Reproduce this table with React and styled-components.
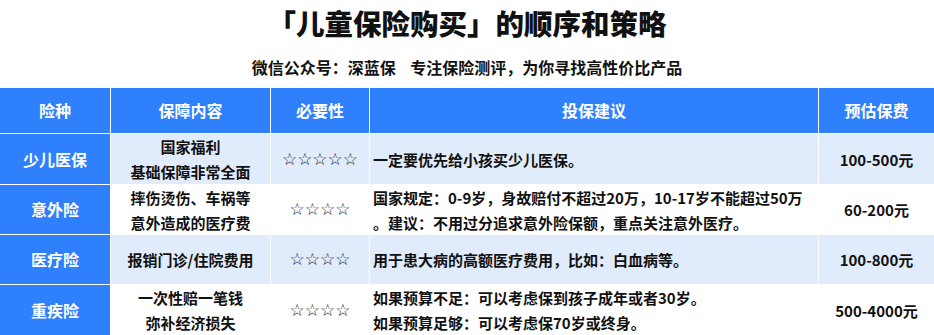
import styled, { createGlobalStyle } from 'styled-components'

const GlobalStyle = createGlobalStyle`
  body {
    margin: 0;
    background: #fff;
    font-family: "Noto Sans CJK SC", "Noto Sans", sans-serif;
    color: #111;
  }
`

const Page = styled.div`
  width: 934px;
  height: 335px;
  overflow: hidden;
`

const Title = styled.h1`
  margin: 0;
  font-size: 28.5px;
  line-height: 46px;
  font-weight: 900;
  text-align: center;
  color: #111;
`

const Subtitle = styled.p`
  margin: 10px 0 0;
  font-size: 16px;
  line-height: 22px;
  font-weight: 700;
  text-align: center;
  white-space: pre;
`

const Table = styled.div`
  margin-top: 10px;
  display: grid;
  grid-template-columns: 110px 159px 98px 448px 1fr;
  grid-template-rows: 45px 50px 49px 49px 50px;
  gap: 1px;
  background: #fff;
`

const Cell = styled.div`
  display: flex;
  flex-direction: column;
  justify-content: center;
  align-items: ${p => (p.$left ? 'flex-start' : 'center')};
  padding: ${p => (p.$left ? '0 0 0 3px' : '0')};
  background: ${p => (p.$head ? '#2f80fd' : p.$shade ? '#e0ebfc' : '#fff')};
  color: ${p => (p.$head ? '#fff' : '#111')};
  font-size: ${p => (p.$head ? '16px' : '15px')};
  font-weight: 700;
  line-height: 25px;
  white-space: nowrap;
  text-align: center;
`

const Stars = styled.span`
  font-family: "DejaVu Sans", sans-serif;
  font-weight: 700;
  font-size: 17px;
  color: #2a2a2a;
`

const heads = ['险种', '保障内容', '必要性', '投保建议', '预估保费']

const rows = [
  {
    name: '少儿医保',
    cover: ['国家福利', '基础保障非常全面'],
    stars: 5,
    advice: ['一定要优先给小孩买少儿医保。'],
    price: '100-500元',
  },
  {
    name: '意外险',
    cover: ['摔伤烫伤、车祸等', '意外造成的医疗费'],
    stars: 4,
    advice: [
      '国家规定：0-9岁，身故赔付不超过20万，10-17岁不能超过50万',
      '。建议：不用过分追求意外险保额，重点关注意外医疗。',
    ],
    price: '60-200元',
  },
  {
    name: '医疗险',
    cover: ['报销门诊/住院费用'],
    stars: 4,
    advice: ['用于患大病的高额医疗费用，比如：白血病等。'],
    price: '100-800元',
  },
  {
    name: '重疾险',
    cover: ['一次性赔一笔钱', '弥补经济损失'],
    stars: 4,
    advice: ['如果预算不足：可以考虑保到孩子成年或者30岁。', '如果预算足够：可以考虑保70岁或终身。'],
    price: '500-4000元',
  },
]

const Lines = ({ items }) => items.map(t => <span key={t}>{t}</span>)

const App = () => {
  return (
    <Page>
      <GlobalStyle />
      <Title>「儿童保险购买」的顺序和策略</Title>
      <Subtitle>微信公众号：深蓝保    专注保险测评，为你寻找高性价比产品</Subtitle>
      <Table>
        {heads.map(h => (
          <Cell key={h} $head>{h}</Cell>
        ))}
        {rows.map((r, i) => {
          const shade = i % 2 === 0
          return [
            <Cell key={r.name + 'n'} $head>{r.name}</Cell>,
            <Cell key={r.name + 'c'} $shade={shade}><Lines items={r.cover} /></Cell>,
            <Cell key={r.name + 's'} $shade={shade}><Stars>{'☆'.repeat(r.stars)}</Stars></Cell>,
            <Cell key={r.name + 'a'} $shade={shade} $left><Lines items={r.advice} /></Cell>,
            <Cell key={r.name + 'p'} $shade={shade}>{r.price}</Cell>,
          ]
        })}
      </Table>
    </Page>
  )
}

export default App
